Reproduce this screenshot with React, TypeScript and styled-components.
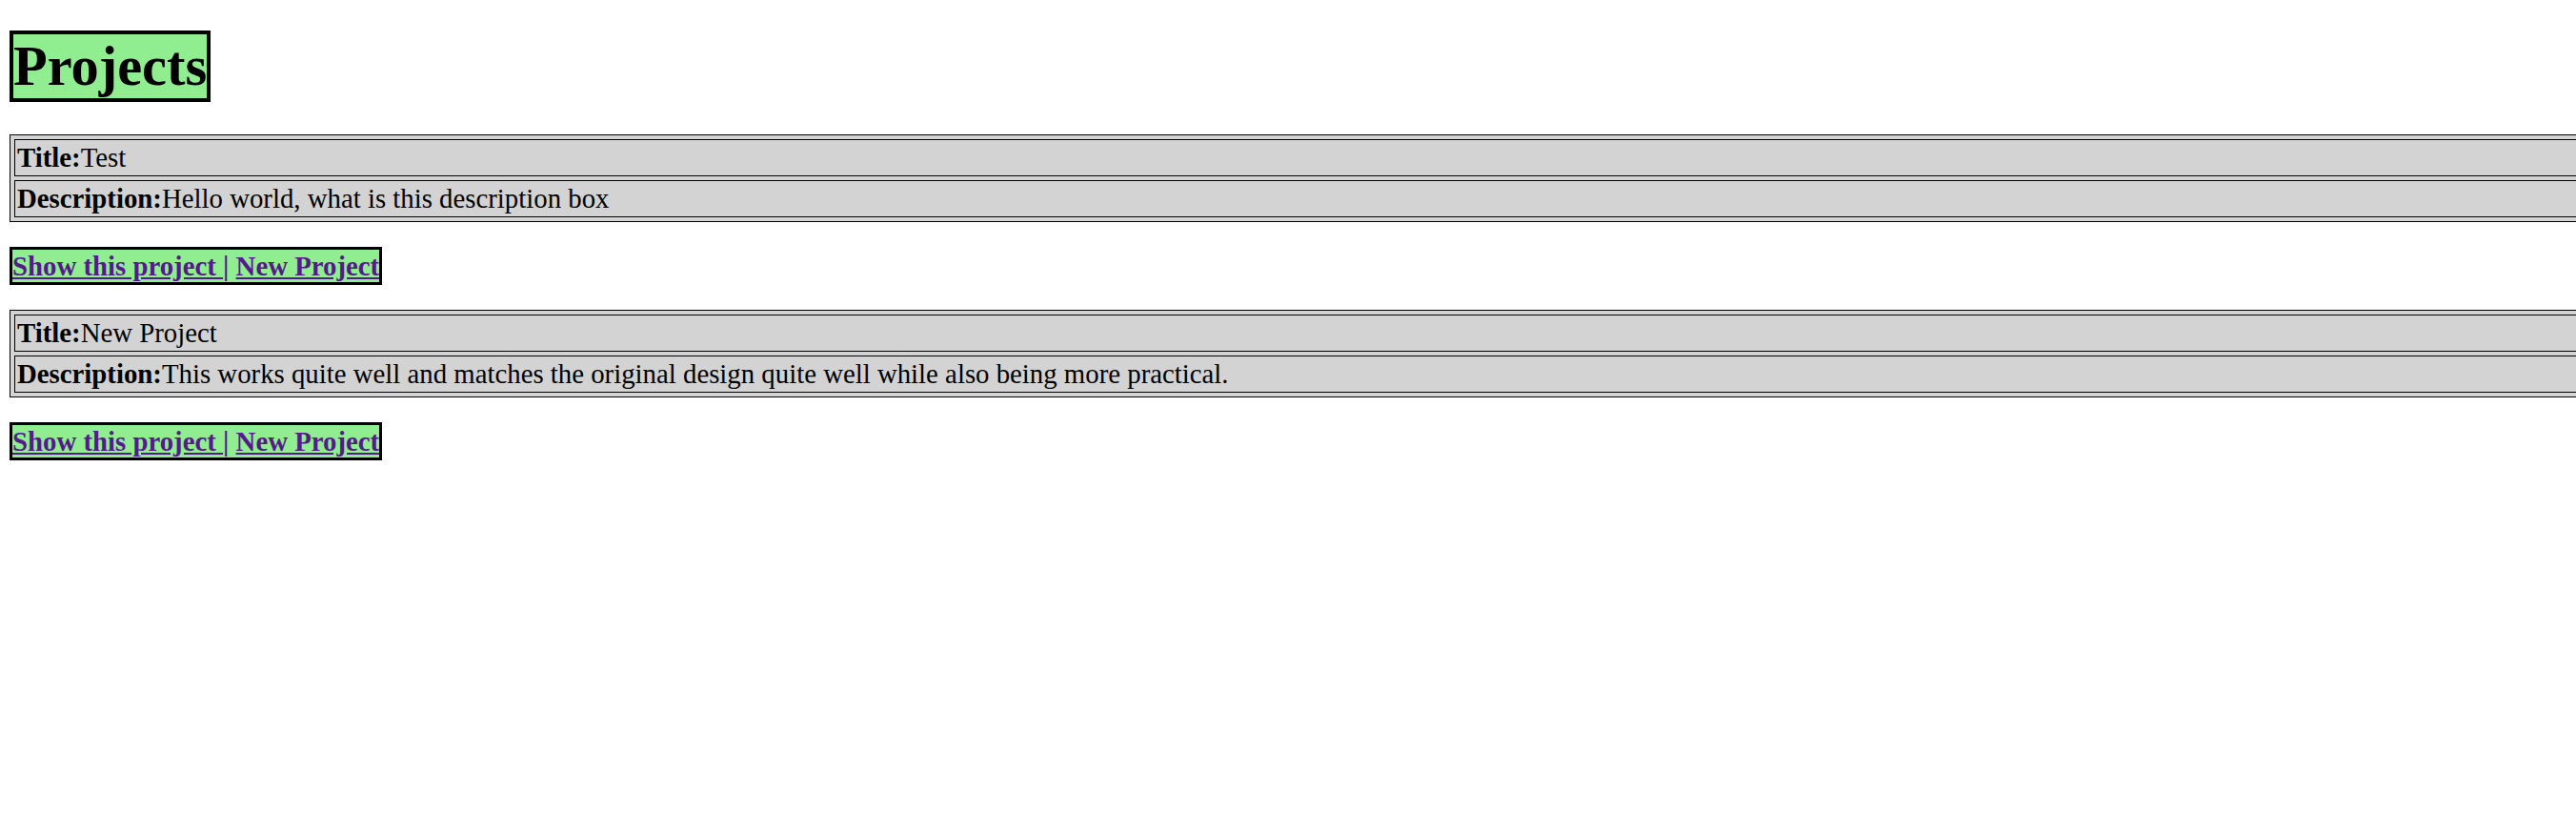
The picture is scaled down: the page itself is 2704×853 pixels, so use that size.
import styled, { createGlobalStyle } from "styled-components";

const GlobalStyle = createGlobalStyle`
  html, body {
    margin: 0;
    padding: 0;
    overflow-x: hidden;
    background-color: #ffffff;
  }

  body {
    font-family: "Liberation Serif", "Times New Roman", serif;
    font-size: 28.8px;
    color: #000000;
  }
`;

const Page = styled.main`
  display: flex;
  flex-direction: column;
  align-items: flex-start;
  padding: 32px 0 0 10px;
`;

const Heading = styled.h1`
  margin: 0 0 34px;
  font-size: 58.4px;
  font-weight: bold;
  background-color: #90ee90;
  border: 4px solid #000000;
`;

const ProjectBlock = styled.section`
  display: flex;
  flex-direction: column;
  align-items: flex-start;
`;

const ProjectTable = styled.table`
  width: 100vw;
  background-color: #d3d3d3;
  border: 1px solid #000000;
  border-spacing: 4px;
  margin-bottom: 26px;
`;

const Cell = styled.td`
  border: 1px solid #000000;
  padding: 2px;
  text-align: left;
`;

const Label = styled.b`
  font-weight: bold;
`;

const Actions = styled.div`
  width: fit-content;
  background-color: #90ee90;
  border: 3px solid #000000;
  font-weight: bold;
  color: #551a8b;
  line-height: 34px;
  margin-bottom: 26px;
`;

const ActionLink = styled.a`
  color: #551a8b;
  text-decoration: underline;
`;

interface IProject {
  title: string;
  description: string;
}

const projects: IProject[] = [
  { title: "Test", description: "Hello world, what is this description box" },
  {
    title: "New Project",
    description:
      "This works quite well and matches the original design quite well while also being more practical.",
  },
];

function App() {
  return (
    <>
      <GlobalStyle />
      <Page>
        <Heading>Projects</Heading>
        {projects.map((project) => (
          <ProjectBlock key={project.title}>
            <ProjectTable>
              <tbody>
                <tr>
                  <Cell>
                    <Label>Title:</Label>
                    {project.title}
                  </Cell>
                </tr>
                <tr>
                  <Cell>
                    <Label>Description:</Label>
                    {project.description}
                  </Cell>
                </tr>
              </tbody>
            </ProjectTable>
            <Actions>
              <ActionLink href="#">Show this project </ActionLink>|{" "}
              <ActionLink href="#">New Project</ActionLink>
            </Actions>
          </ProjectBlock>
        ))}
      </Page>
    </>
  );
}

export default App;
